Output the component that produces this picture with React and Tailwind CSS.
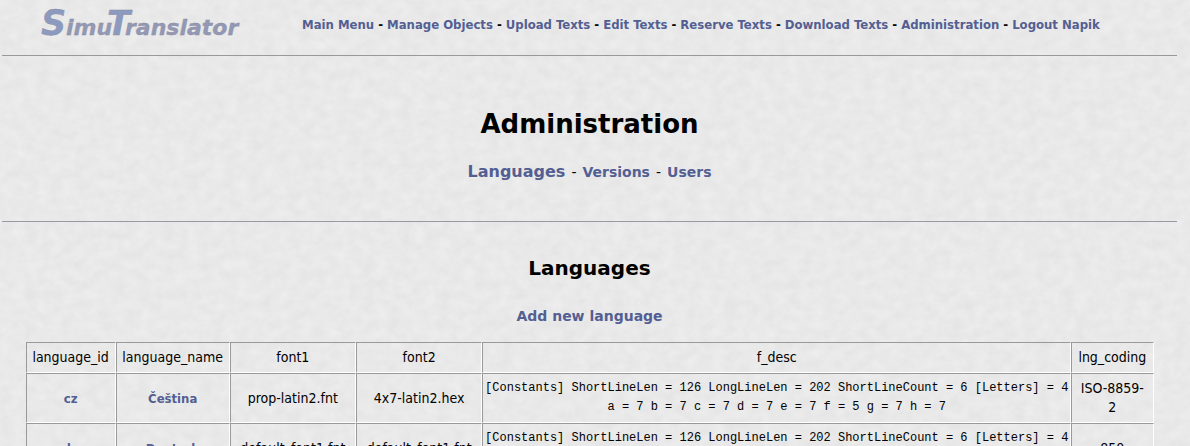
const navItems = [
  "Main Menu",
  "Manage Objects",
  "Upload Texts",
  "Edit Texts",
  "Reserve Texts",
  "Download Texts",
  "Administration",
  "Logout Napik",
];

const columns = [
  { name: "language_id", width: "w-[8%]" },
  { name: "language_name", width: "w-[10.1%]" },
  { name: "font1", width: "w-[11.2%]" },
  { name: "font2", width: "w-[11.2%]" },
  { name: "f_desc", width: "" },
  { name: "lng_coding", width: "w-[7.3%]" },
];

const description =
  "[Constants] ShortLineLen = 126 LongLineLen = 202 ShortLineCount = 6 [Letters] = 4 a = 7 b = 7 c = 7 d = 7 e = 7 f = 5 g = 7 h = 7";

const languages = [
  { id: "cz", name: "Čeština", font1: "prop-latin2.fnt", font2: "4x7-latin2.hex", coding: "ISO-8859-2" },
  { id: "de", name: "Deutsch", font1: "default_font1.fnt", font2: "default_font1.fnt", coding: "850" },
];

const linkStyle = "text-[#535f92] hover:underline";
const borderStyle =
  "border border-t-[#999999] border-l-[#999999] border-r-white border-b-white text-center align-middle font-normal";
const cellStyle = `${borderStyle} px-[5px]`;
const headStyle = `${borderStyle} px-1`;

function PaperTexture() {
  return (
    <svg aria-hidden="true" className="pointer-events-none absolute inset-0 -z-10 h-full w-full">
      <filter id="paper" x="0" y="0" width="100%" height="100%" colorInterpolationFilters="sRGB">
        <feTurbulence type="fractalNoise" baseFrequency="0.08 0.1" numOctaves="3" seed="4" />
        <feColorMatrix values="0.05 0 0 0 0.888  0.05 0 0 0 0.888  0.05 0 0 0 0.888  0 0 0 0 1" />
      </filter>
      <rect width="100%" height="100%" filter="url(#paper)" />
    </svg>
  );
}

function Logo() {
  return (
    <a href="#home" aria-label="SimuTranslator" className="block shrink-0">
      <svg
        width="204"
        height="40"
        viewBox="0 0 204 40"
        className="font-['DejaVu_Sans',sans-serif] font-bold italic"
        stroke="#8c8c9c"
        strokeWidth="0.3"
      >
        <text y="31" fontSize="22" fill="#9398b4">
          <tspan x="1" fontSize="35" fill="#8c9abf">S</tspan>
          <tspan x="26">imu</tspan>
          <tspan x="67" fontSize="34" fill="#8c9abf">T</tspan>
          <tspan x="85">ranslator</tspan>
        </text>
      </svg>
    </a>
  );
}

export default function App() {
  return (
    <div className="relative isolate min-h-screen overflow-hidden bg-[#e8e8e8] pr-[13px] pl-[2px] font-['DejaVu_Sans_Condensed','DejaVu_Sans',sans-serif] text-sm text-black">
      <PaperTexture />
      <header className="flex h-14 items-start border-b border-[#999999] pt-1 pl-[38px]">
        <Logo />
        <nav className="ml-[58px] flex gap-1 pt-[11px] text-[13px] leading-5 font-bold whitespace-nowrap">
          {navItems.map((item, i) => (
            <span key={item} className="flex gap-1">
              {i > 0 && <span>-</span>}
              <a href="#nav" className={linkStyle}>{item}</a>
            </span>
          ))}
        </nav>
      </header>

      <section className="border-b border-[#9999a5] pt-12 pb-[39px] text-center font-['DejaVu_Sans',sans-serif]">
        <h1 className="text-[26px] leading-10 font-bold">Administration</h1>
        <p className="mt-[18px] flex items-baseline justify-center gap-1.5 text-sm leading-5">
          <a href="#languages" className={`${linkStyle} text-base leading-5 font-bold`}>Languages</a>
          <span>-</span>
          <a href="#versions" className={`${linkStyle} font-bold`}>Versions</a>
          <span>-</span>
          <a href="#users" className={`${linkStyle} font-bold`}>Users</a>
        </p>
      </section>

      <main className="pt-8 text-center">
        <h2 className="font-['DejaVu_Sans',sans-serif] text-xl leading-7 font-bold">Languages</h2>
        <p className="mt-6 font-['DejaVu_Sans',sans-serif] text-sm leading-5">
          <a href="#add" className={`${linkStyle} font-bold`}>Add new language</a>
        </p>
        <table className="mx-auto mt-4 w-[96%] table-fixed border-separate border-spacing-0 leading-[19px]">
          <thead>
            <tr className="h-[31px]">
              {columns.map((c) => (
                <th key={c.name} scope="col" className={`${headStyle} ${c.width}`}>{c.name}</th>
              ))}
            </tr>
          </thead>
          <tbody>
            {languages.map((l) => (
              <tr key={l.id} className="h-[50px]">
                <td className={cellStyle}><a href="#edit" className={`${linkStyle} text-[13px] font-bold`}>{l.id}</a></td>
                <td className={cellStyle}><a href="#edit" className={`${linkStyle} text-[13px] font-bold`}>{l.name}</a></td>
                <td className={cellStyle}>{l.font1}</td>
                <td className={cellStyle}>{l.font2}</td>
                <td className={`${borderStyle} font-['Liberation_Mono',monospace] text-xs leading-[19px]`}>{description}</td>
                <td className={cellStyle}>{l.coding}</td>
              </tr>
            ))}
          </tbody>
        </table>
      </main>
    </div>
  );
}
